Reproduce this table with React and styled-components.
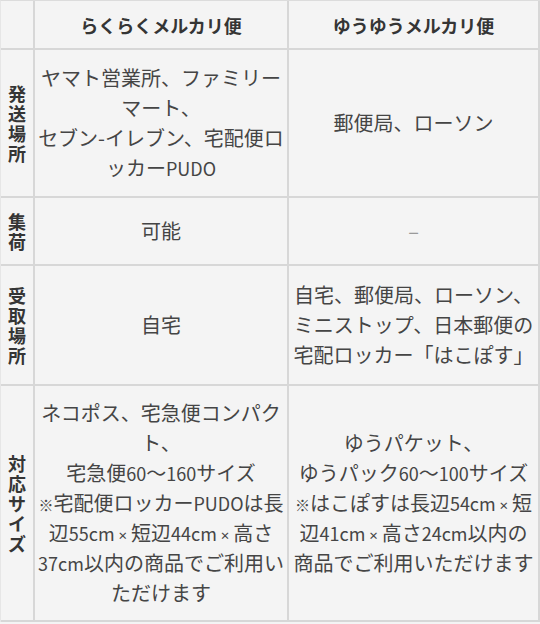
import React from "react";
import styled, { createGlobalStyle } from "styled-components";

const rows = [
  {
    label: "発送場所",
    height: 148,
    raku: ["ヤマト営業所、ファミリー", "マート、", "セブン-イレブン、宅配便ロ", "ッカーPUDO"],
    yuu: ["郵便局、ローソン"],
  },
  {
    label: "集荷",
    height: 68,
    raku: ["可能"],
    yuu: ["–"],
    dim: true,
  },
  {
    label: "受取場所",
    height: 120,
    raku: ["自宅"],
    yuu: ["自宅、郵便局、ローソン、", "ミニストップ、日本郵便の", "宅配ロッカー「はこぽす」"],
  },
  {
    label: "対応サイズ",
    height: 236,
    raku: [
      "ネコポス、宅急便コンパク",
      "ト、",
      "宅急便60〜160サイズ",
      "※宅配便ロッカーPUDOは長",
      "辺55cm × 短辺44cm × 高さ",
      "37cm以内の商品でご利用い",
      "ただけます",
    ],
    yuu: [
      "ゆうパケット、",
      "ゆうパック60〜100サイズ",
      "※はこぽすは長辺54cm × 短",
      "辺41cm × 高さ24cm以内の",
      "商品でご利用いただけます",
    ],
  },
];

// Latin runs, the multiplication sign and the reference mark are set narrower
function Run({ text }) {
  const parts = text.split(/([0-9A-Za-z]+| × |※)/);
  return parts.map((part, i) => {
    if (!part) return null;
    if (part === "※") return <Mark key={i}>※</Mark>;
    if (part === " × ") return <Times key={i}> × </Times>;
    if (/^[0-9A-Za-z]+$/.test(part)) return <Latin key={i}>{part}</Latin>;
    return <React.Fragment key={i}>{part}</React.Fragment>;
  });
}

function Lines({ lines }) {
  return lines.map((line, i) => (
    <React.Fragment key={i}>
      {i > 0 && <br />}
      <Run text={line} />
    </React.Fragment>
  ));
}

export default function App() {
  return (
    <>
      <GlobalStyle />
      <Table>
        <colgroup>
          <col style={{ width: 34 }} />
          <col style={{ width: 254 }} />
          <col />
        </colgroup>
        <thead>
          <Row height={49}>
            <HeadCell></HeadCell>
            <HeadCell>らくらくメルカリ便</HeadCell>
            <HeadCell>ゆうゆうメルカリ便</HeadCell>
          </Row>
        </thead>
        <tbody>
          {rows.map((row) => (
            <Row key={row.label} height={row.height}>
              <SideCell>
                <VerticalLabel>{row.label}</VerticalLabel>
              </SideCell>
              <Cell>
                <Lines lines={row.raku} />
              </Cell>
              <Cell dim={row.dim ? 1 : 0}>
                <Lines lines={row.yuu} />
              </Cell>
            </Row>
          ))}
        </tbody>
      </Table>
    </>
  );
}

const GlobalStyle = createGlobalStyle`
  body {
    margin: 0;
    background: #f4f4f4;
    font-family: "Noto Sans CJK JP", "Noto Sans", sans-serif;
  }
`;

const Table = styled.table`
  width: 540px;
  table-layout: fixed;
  border-spacing: 0;
  background: #f4f4f4;
  border-top: 1px solid #dcdcdc;
  border-left: 1px solid #e6e6e6;
`;

const Row = styled.tr`
  height: ${(props) => props.height}px;
`;

const HeadCell = styled.th`
  padding: 0;
  font-size: 18px;
  font-weight: 700;
  color: #353535;
  text-align: center;
  vertical-align: middle;
  border-right: 2px solid #d7d7d7;
  border-bottom: 2px solid #d7d7d7;
`;

const SideCell = styled.th`
  padding: 0;
  font-size: 18px;
  font-weight: 700;
  color: #353535;
  vertical-align: middle;
  border-right: 2px solid #d7d7d7;
  border-bottom: 2px solid #d7d7d7;
`;

const VerticalLabel = styled.span`
  display: block;
  width: 18px;
  margin: 0 auto;
  line-height: 20px;
  word-break: break-all;
`;

const Cell = styled.td`
  padding: 0;
  font-size: 20px;
  line-height: 30px;
  color: ${(props) => (props.dim ? "#9a9a9a" : "#454545")};
  text-align: center;
  vertical-align: middle;
  white-space: nowrap;
  border-right: 2px solid #d7d7d7;
  border-bottom: 2px solid #d7d7d7;
`;

const Latin = styled.span`
  font-size: 18px;
  line-height: 1;
`;

const Times = styled.span`
  font-family: "Noto Sans", sans-serif;
  font-size: 15px;
  line-height: 1;
  white-space: pre;
`;

const Mark = styled.span`
  font-size: 15px;
  line-height: 1;
`;
